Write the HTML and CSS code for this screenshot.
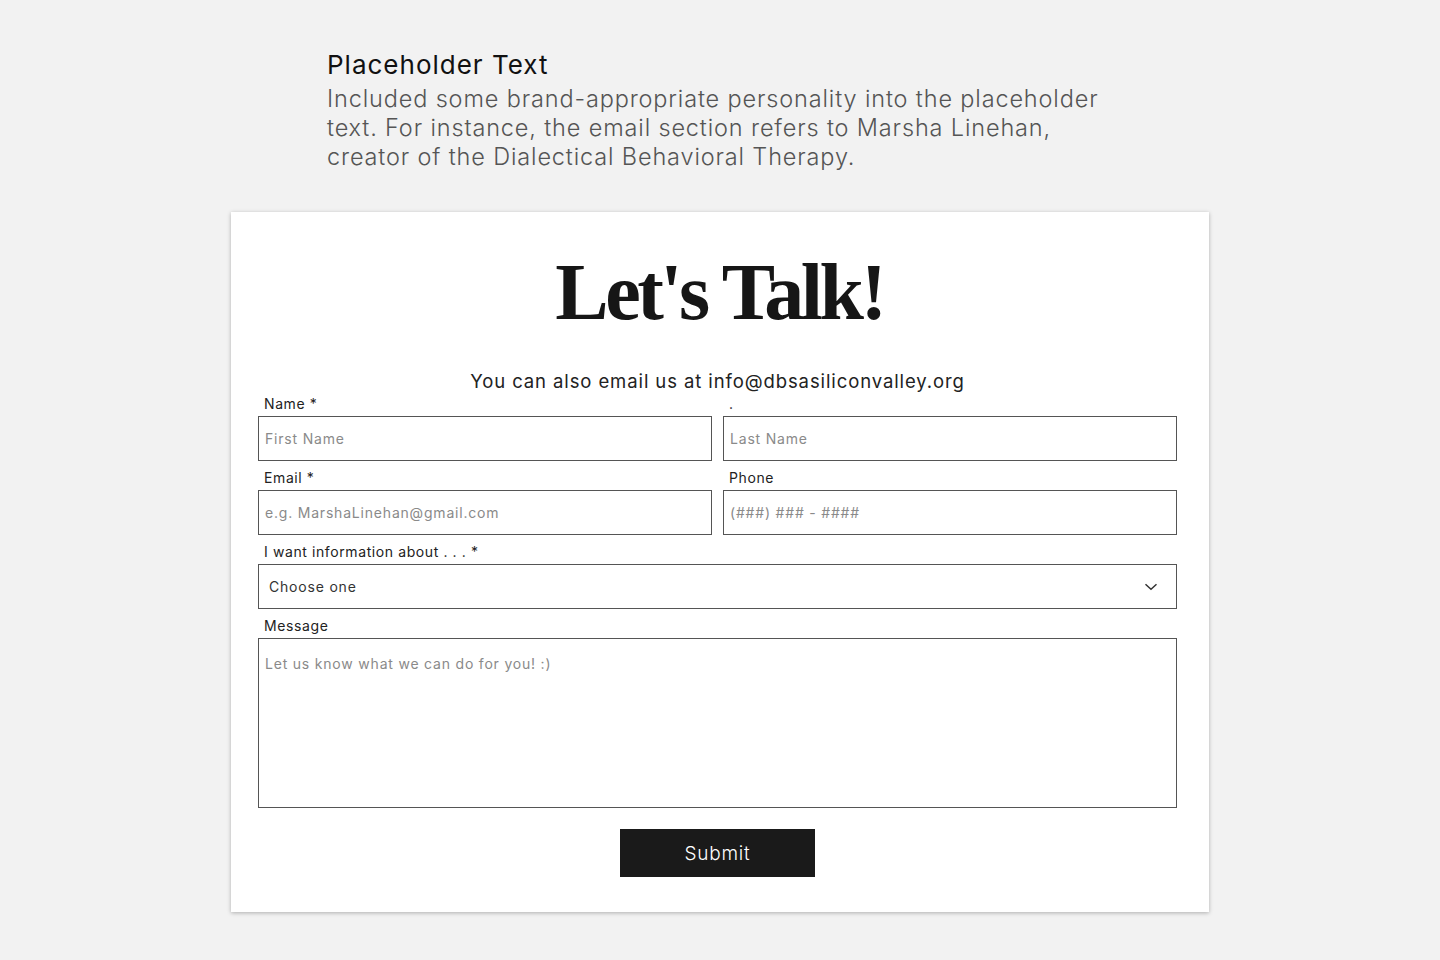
FILE: index.html
```html
<!DOCTYPE html>
<html lang="en">
<head>
<meta charset="utf-8">
<title>Let's Talk</title>
<link rel="stylesheet" href="styles.css">
</head>
<body>
<main class="page">
  <section class="note">
    <h2 class="note-title">Placeholder Text</h2>
    <p class="note-text">Included some brand-appropriate personality into the placeholder text. For instance, the email section refers to Marsha Linehan, creator of the Dialectical Behavioral Therapy.</p>
  </section>

  <form class="card" onsubmit="return false">
    <h1 class="card-title">Let's Talk!</h1>
    <p class="card-sub">You can also email us at info@dbsasiliconvalley.org</p>

    <div class="fields">
      <div class="field">
        <label class="label">Name *</label>
        <input class="input" type="text" placeholder="First Name">
      </div>
      <div class="field">
        <label class="label">.</label>
        <input class="input" type="text" placeholder="Last Name">
      </div>
      <div class="field">
        <label class="label">Email *</label>
        <input class="input" type="text" placeholder="e.g. MarshaLinehan@gmail.com">
      </div>
      <div class="field">
        <label class="label">Phone</label>
        <input class="input" type="text" placeholder="(###) ### - ####">
      </div>
      <div class="field wide">
        <label class="label">I want information about . . . *</label>
        <div class="select">
          <span>Choose one</span>
          <svg class="chev" width="14" height="8" viewBox="0 0 14 8"><path d="M1.5 1.2l5.5 5 5.5-5" fill="none" stroke="#333" stroke-width="1.5"/></svg>
        </div>
      </div>
      <div class="field wide">
        <label class="label">Message</label>
        <textarea class="textarea" placeholder="Let us know what we can do for you! :)"></textarea>
      </div>
    </div>

    <div class="actions">
      <button class="submit" type="submit">Submit</button>
    </div>
  </form>
</main>
</body>
</html>
```

FILE: styles.css
```css
* { box-sizing: border-box; }
html, body { margin: 0; padding: 0; }
body {
  background: #f2f2f2;
  font-family: Inter, "Noto Sans", sans-serif;
  color: #222;
  width: 1440px;
  height: 960px;
  overflow: hidden;
}
.page {
  display: flex;
  flex-direction: column;
  align-items: center;
  padding-top: 48px;
}
.note {
  width: 786px;
}
.note-title {
  margin: 0;
  font-weight: 400;
  font-size: 26px;
  letter-spacing: 1px;
  line-height: 34px;
  color: #111;
}
.note-text {
  margin: 2px 0 0;
  font-weight: 300;
  font-size: 23.5px;
  letter-spacing: 0.85px;
  line-height: 29px;
  color: #555;
}
.card {
  margin-top: 41px;
  width: 978px;
  height: 700px;
  background: #fff;
  box-shadow: 0 1px 4px rgba(0,0,0,0.28);
  padding: 35px 32px 34px 27px;
  display: flex;
  flex-direction: column;
}
.card-title {
  margin: 0;
  text-align: center;
  font-family: "Liberation Serif", "Times New Roman", serif;
  font-weight: 700;
  font-size: 80px;
  letter-spacing: -3.5px;
  line-height: 90px;
  color: #161616;
  padding-left: 4px;
}
.card-sub {
  margin: 32px 0 0;
  text-align: center;
  font-size: 18.5px;
  letter-spacing: 0.9px;
  line-height: 24px;
  color: #222;
}
.fields {
  margin-top: 2px;
  display: grid;
  grid-template-columns: 1fr 1fr;
  column-gap: 11px;
  row-gap: 8px;
}
.field {
  display: flex;
  flex-direction: column;
}
.field.wide { grid-column: 1 / -1; }
.label {
  font-size: 14px;
  letter-spacing: 0.6px;
  line-height: 17px;
  color: #222;
  padding-left: 6px;
  margin-bottom: 4px;
}
.input, .textarea, .select {
  border: 1px solid #555;
  background: #fff;
  font-family: Inter, "Noto Sans", sans-serif;
  font-size: 14px;
  letter-spacing: 0.8px;
  color: #333;
  border-radius: 0;
  outline: none;
}
.input {
  height: 45px;
  padding: 0 6px;
}
.input::placeholder, .textarea::placeholder { color: #8a8a8a; font-weight: 400; }
.select {
  height: 45px;
  display: flex;
  align-items: center;
  justify-content: space-between;
  padding: 0 18px 0 10px;
  color: #333;
}
.chev { display: block; }
.textarea {
  height: 170px;
  padding: 15px 6px;
  resize: none;
  line-height: 20px;
}
.actions {
  margin-top: 21px;
  display: flex;
  justify-content: center;
}
.submit {
  width: 195px;
  height: 48px;
  background: #1a1a1a;
  color: #fff;
  border: none;
  font-family: Inter, "Noto Sans", sans-serif;
  font-weight: 300;
  font-size: 19px;
  letter-spacing: 0.8px;
  cursor: pointer;
}
```
